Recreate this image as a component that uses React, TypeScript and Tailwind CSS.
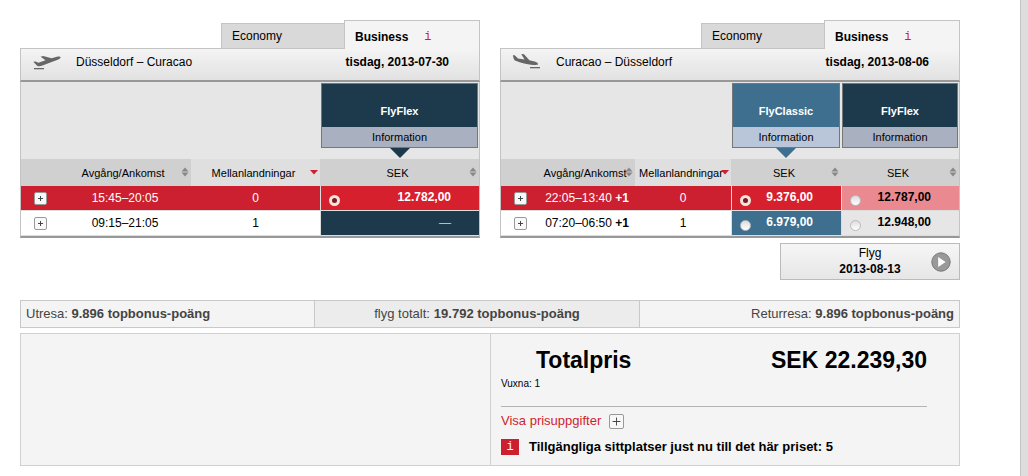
import { clsx } from "clsx";

type Fare = {
  name: string;
  tone: "navy" | "blue";
  active?: boolean;
};

type Offer = {
  price: string | null;
  selected?: boolean;
};

type Row = {
  time: string;
  nextDay?: boolean;
  stops: number;
  offers: Offer[];
};

type Flight = {
  id: string;
  route: string;
  date: string;
  direction: "out" | "back";
  fares: Fare[];
  rows: Row[];
};

const flights: Flight[] = [
  {
    id: "utresa",
    route: "Düsseldorf – Curacao",
    date: "tisdag, 2013-07-30",
    direction: "out",
    fares: [{ name: "FlyFlex", tone: "navy", active: true }],
    rows: [
      { time: "15:45–20:05", stops: 0, offers: [{ price: "12.782,00", selected: true }] },
      { time: "09:15–21:05", stops: 1, offers: [{ price: null }] },
    ],
  },
  {
    id: "returresa",
    route: "Curacao – Düsseldorf",
    date: "tisdag, 2013-08-06",
    direction: "back",
    fares: [
      { name: "FlyClassic", tone: "blue", active: true },
      { name: "FlyFlex", tone: "navy" },
    ],
    rows: [
      {
        time: "22:05–13:40",
        nextDay: true,
        stops: 0,
        offers: [{ price: "9.376,00", selected: true }, { price: "12.787,00" }],
      },
      {
        time: "07:20–06:50",
        nextDay: true,
        stops: 1,
        offers: [{ price: "6.979,00" }, { price: "12.948,00" }],
      },
    ],
  },
];

function PlaneIcon({ direction }: { direction: "out" | "back" }) {
  return (
    <svg viewBox="0 0 28 16" className="h-4 w-7 shrink-0 fill-[#666]" aria-hidden="true">
      {direction === "out" ? (
        <>
          <path d="M0.3 7.8L2.6 7.4L5.4 8.8L12.5 6.2L7.6 2.8L10.2 2L18.5 4.2L24 2.8C26 2.4 27.6 2.6 27.6 3.6C27.4 5 24 6.2 20 7.6L9.5 11.6C6 12.8 4.6 12.2 3.4 11Z" />
          <rect x="1" y="14" width="10" height="1.3" />
        </>
      ) : (
        <>
          <path d="M0 1L2 1.4L5 4.6L11.5 5.6L8.2 0L11 0.3L16.4 6.2L22.5 7.8C24.6 8.6 25.4 9.6 24.8 10.8C20 11.6 8 9 1.8 6.4C0.6 4.8 0 3 0 1Z" />
          <rect x="17" y="13" width="10" height="1.3" />
        </>
      )}
    </svg>
  );
}

function SortIcon({ sorted }: { sorted?: boolean }) {
  return (
    <svg viewBox="0 0 8 10" className="absolute top-2 right-0.5 h-2.5 w-2" aria-hidden="true">
      {sorted ? (
        <path d="M0 3h8L4 7.5z" fill="#cc1f2f" />
      ) : (
        <path d="M0.5 4.4h7L4 0.4zM0.5 5.6h7L4 9.6z" fill="#888" />
      )}
    </svg>
  );
}

function SortHeader({ label, sorted }: { label: string; sorted?: boolean }) {
  return (
    <th
      scope="col"
      className={clsx("relative h-[27px] p-0 font-normal", sorted ? "bg-[#dfdfdf]" : "bg-[#d0d0d0]")}
    >
      <button type="button" className="w-full pr-1 text-center text-[11px] leading-6 whitespace-nowrap">
        {label}
        <SortIcon sorted={sorted} />
      </button>
    </th>
  );
}

function PlusButton({ label, large }: { label: string; large?: boolean }) {
  return (
    <button
      type="button"
      aria-label={label}
      className={clsx(
        "inline-flex items-center justify-center rounded-xs border border-[#999] bg-[#f8f8f8] text-[#444]",
        large ? "size-[15px]" : "size-[13px]",
      )}
    >
      <svg viewBox="0 0 7 7" className={large ? "size-[11px]" : "size-[7px]"} aria-hidden="true">
        <path
          d={large ? "M3.2 1h.6v2.2H6v.6H3.8V6h-.6V3.8H1v-.6h2.2z" : "M3 1h1v2h2v1H4v2H3V4H1V3h2z"}
          fill="currentColor"
        />
      </svg>
    </button>
  );
}

function FareHeader({ fare }: { fare: Fare }) {
  const blue = fare.tone === "blue";
  return (
    <th scope="col" className="h-[77px] p-px align-top font-normal">
      <div className="border border-[#777] text-[11px]">
        <div
          className={clsx(
            "flex h-[43px] items-end justify-center pb-2 font-bold text-white",
            blue ? "bg-[#3e6f8e]" : "bg-[#1d3a4c]",
          )}
        >
          {fare.name}
        </div>
        <a
          href="#information"
          className={clsx("block h-5 text-center leading-5", blue ? "bg-[#b9c6d9]" : "bg-[#a9b0c0]")}
        >
          Information
        </a>
      </div>
      {fare.active && (
        <svg
          viewBox="0 0 20 10"
          className={clsx("mx-auto h-2.5 w-5", blue ? "fill-[#3e6f8e]" : "fill-[#1d3a4c]")}
          aria-hidden="true"
        >
          <path d="M0 0h20L10 10z" />
        </svg>
      )}
    </th>
  );
}

function OfferCell({ offer, fare, group, first }: { offer: Offer; fare: Fare; group: string; first: boolean }) {
  return (
    <td
      className={clsx(
        "border-b border-l border-[#ddd] p-0 font-bold",
        offer.selected && "bg-[#d6202d] text-white",
        !offer.selected && fare.active && fare.tone === "navy" && "bg-[#1d3a4c] text-[#bbb]",
        !offer.selected && fare.active && fare.tone === "blue" && "bg-[#3e6f8e] text-white",
        !offer.selected && !fare.active && "text-black",
        !offer.selected && !fare.active && (first ? "bg-[#eb8990]" : "bg-[#e6e6e6]"),
      )}
    >
      {offer.price ? (
        <label className="flex h-6 items-center justify-between pr-7 pl-2">
          <input
            type="radio"
            name={group}
            defaultChecked={offer.selected}
            className="mt-1 size-[11px] appearance-none rounded-full border border-[#bbb] bg-linear-to-b from-[#ddd] to-white checked:border-3 checked:border-[#f3e4dc] checked:bg-[#7a1a24] checked:bg-none"
          />
          <span className="pb-0.5 leading-5">{offer.price}</span>
        </label>
      ) : (
        <div className="pr-7 text-right font-normal">—</div>
      )}
    </td>
  );
}

function FlightPanel({ flight }: { flight: Flight }) {
  const wide = flight.fares.length === 1;
  return (
    <section className="min-w-0 flex-1" aria-label={flight.route}>
      <div className="flex items-end justify-end">
        <button
          type="button"
          className="h-[25px] w-[123px] border-t border-l border-[#c4c4c4] bg-[#d9d9d9] pl-2.5 text-left"
        >
          Economy
        </button>
        {/* the open tab covers the top border of the bar below */}
        <button
          type="button"
          className="relative -mb-px flex h-[29px] w-[136px] items-center border-x border-t border-[#c4c4c4] bg-[#f4f4f4] pt-1 pl-2.5 font-bold"
        >
          Business
          <span className="ml-4 font-['Liberation_Mono',monospace] font-normal text-[#cc1f2f]">i</span>
        </button>
      </div>
      <div className="flex h-[34px] items-center border border-b-2 border-[#c4c4c4] border-b-[#989898] bg-linear-to-b from-[#f4f4f4] to-[#e2e2e2] pr-[30px] pb-1.5 pl-3">
        <PlaneIcon direction={flight.direction} />
        <span className="ml-[15px]">{flight.route}</span>
        <span className="ml-auto font-bold">{flight.date}</span>
      </div>
      <table className="w-full table-fixed border-separate border-spacing-0 border-x border-b-2 border-[#c4c4c4] border-b-[#989898]">
        <colgroup>
          <col className="w-[38px]" />
          <col />
          <col className={wide ? "w-[129px]" : "w-[96px]"} />
          {flight.fares.map((fare) => (
            <col key={fare.name} className={wide ? "w-[159px]" : fare.active ? "w-[110px]" : "w-[118px]"} />
          ))}
        </colgroup>
        <thead>
          <tr className="bg-[#e6e6e6]">
            <td colSpan={3} />
            {flight.fares.map((fare) => (
              <FareHeader key={fare.name} fare={fare} />
            ))}
          </tr>
          <tr>
            <td className="bg-[#d0d0d0]" />
            <SortHeader label="Avgång/Ankomst" />
            <SortHeader label="Mellanlandningar" sorted />
            {flight.fares.map((fare) => (
              <SortHeader key={fare.name} label="SEK" />
            ))}
          </tr>
        </thead>
        <tbody>
          {flight.rows.map((row, i) => (
            <tr
              key={row.time}
              className={clsx(
                "h-[25px] text-center leading-6",
                row.offers.some((offer) => offer.selected) ? "bg-[#cc1f2f] text-white" : "bg-white",
              )}
            >
              <td className="border-b border-[#ddd] p-0">
                <div className="flex justify-center">
                  <PlusButton label="Visa detaljer" />
                </div>
              </td>
              <td className="border-b border-[#ddd] p-0 whitespace-nowrap">
                {row.time}
                {row.nextDay && <b> +1</b>}
              </td>
              <td className="border-b border-[#ddd] p-0">{row.stops}</td>
              {row.offers.map((offer, n) => (
                <OfferCell
                  key={flight.fares[n].name}
                  offer={offer}
                  fare={flight.fares[n]}
                  group={flight.id}
                  first={i === 0}
                />
              ))}
            </tr>
          ))}
        </tbody>
      </table>
    </section>
  );
}

function NextFlightButton() {
  return (
    <button
      type="button"
      className="flex h-[37px] w-[180px] items-center border border-[#bbb] bg-linear-to-b from-[#f6f6f6] to-[#e6e6e6] pr-2"
    >
      <span className="flex-1 pb-0.5 pl-7 text-center leading-4">
        Flyg
        <b className="block">2013-08-13</b>
      </span>
      <svg viewBox="0 0 20 20" className="size-5" aria-hidden="true">
        <circle cx="10" cy="10" r="9.2" fill="#999" stroke="#777" />
        <path d="M7.2 5v10l7.4-5z" fill="#fff" />
      </svg>
    </button>
  );
}

function PointsBar() {
  return (
    <div className="mt-5 flex h-7 items-center border border-[#c8c8c8] bg-[#f4f4f4] text-[13px] text-[#444]">
      <p className="w-[293px] pl-[5px]">
        Utresa: <b>9.896 topbonus-poäng</b>
      </p>
      <p className="flex h-full flex-1 items-center justify-center gap-1 border-x border-[#c8c8c8] bg-[#ececec]">
        flyg totalt: <b>19.792 topbonus-poäng</b>
      </p>
      <p className="w-[319px] pr-[5px] text-right">
        Returresa: <b>9.896 topbonus-poäng</b>
      </p>
    </div>
  );
}

function PriceSummary() {
  return (
    <div className="mt-[5px] grid grid-cols-2 border border-[#d0d0d0] bg-[#f4f4f4]">
      <div className="col-start-2 border-l border-[#d0d0d0] pt-2.5 pr-8 pb-2.5 pl-2.5 text-[13px]">
        <div className="flex items-center justify-between pl-[35px] text-[23px] leading-8 font-bold">
          <h2>Totalpris</h2>
          <span>SEK 22.239,30</span>
        </div>
        <p className="text-[10px] leading-4">Vuxna: 1</p>
        <hr className="mt-3.5 mb-1 border-[#b4b4b4]" />
        <div className="flex items-center gap-2 leading-5">
          <a href="#prisuppgifter" className="text-[#cc1f2f]">
            Visa prisuppgifter
          </a>
          <PlusButton label="Visa prisuppgifter" large />
        </div>
        <p className="mt-2 flex items-center gap-2.5 leading-4 font-bold">
          <span className="flex h-4 w-[18px] items-center justify-center bg-[#cc1f2f] font-['Liberation_Mono',monospace] text-xs font-normal text-white">
            i
          </span>
          Tillgängliga sittplatser just nu till det här priset: 5
        </p>
      </div>
    </div>
  );
}

export default function App() {
  return (
    <div className="flex min-h-screen bg-white font-['Liberation_Sans',Arial,sans-serif] text-xs text-black">
      <main className="min-w-0 flex-1 pt-5 pr-[60px] pb-2 pl-5">
        <div className="flex gap-5">
          {flights.map((flight) => (
            <FlightPanel key={flight.id} flight={flight} />
          ))}
        </div>
        <div className="mt-[5px] flex justify-end">
          <NextFlightButton />
        </div>
        <PointsBar />
        <PriceSummary />
      </main>
      <div className="w-2 border-l border-[#c4c4c4] bg-[#ddd]" />
    </div>
  );
}
